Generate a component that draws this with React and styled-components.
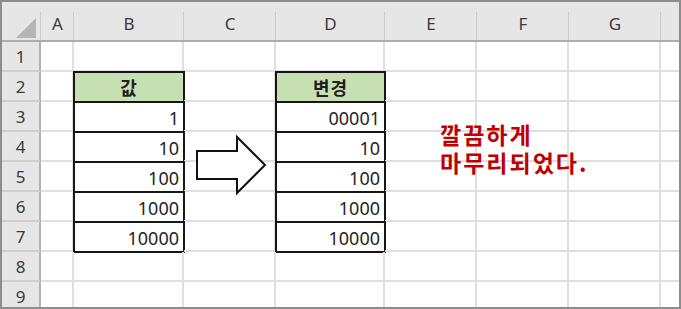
import React from 'react';
import styled, {createGlobalStyle} from 'styled-components';

const GlobalStyle = createGlobalStyle`
    html, body {
        margin: 0;
        padding: 0;
        background: #fff;
    }
    body {
        font-family: "Noto Sans", "Noto Sans CJK KR", sans-serif;
    }
`;

const COLUMNS = [
    {name: 'A', width: 33},
    {name: 'B', width: 110},
    {name: 'C', width: 92},
    {name: 'D', width: 109},
    {name: 'E', width: 92},
    {name: 'F', width: 92},
    {name: 'G', width: 92},
    {name: '', width: 92},
];

const ROWS = 9;

// boxed ranges: column name -> values for rows 2..7
const TABLES = {
    B: ['값', '1', '10', '100', '1000', '10000'],
    D: ['변경', '00001', '10', '100', '1000', '10000'],
};

const Frame = styled.div`
    position: relative;
    width: 681px;
    height: 309px;
    box-sizing: border-box;
    border: 2px solid #8d8d8d;
    overflow: hidden;
    background: #fff;
`;

const Sheet = styled.div`
    display: grid;
    grid-template-columns: 39px ${COLUMNS.map((c) => `${c.width}px`).join(' ')};
    grid-template-rows: 40px repeat(${ROWS}, 30px);
`;

const HeadCell = styled.div`
    position: relative;
    box-sizing: border-box;
    display: flex;
    justify-content: center;
    align-items: flex-end;
    padding-bottom: 4px;
    background: #e6e6e6;
    border-bottom: 2px solid #adadad;
    color: #3a3a3a;
    font-size: 17px;
    line-height: 24px;

    &::after {
        content: '';
        position: absolute;
        right: 0;
        top: 10px;
        bottom: 0;
        width: 1px;
        background: #cbcbcb;
    }
`;

const Corner = styled(HeadCell)`
    &::before {
        content: '';
        position: absolute;
        right: 5px;
        bottom: 2px;
        width: 0;
        height: 0;
        border-left: 20px solid transparent;
        border-bottom: 20px solid #b5b5b5;
    }
`;

const RowHead = styled.div`
    box-sizing: border-box;
    display: flex;
    justify-content: center;
    align-items: flex-end;
    padding-bottom: 1px;
    background: #e6e6e6;
    border-right: 2px solid #b2b2b2;
    border-bottom: 2px solid #cfcfcf;
    color: #3a3a3a;
    font-size: 17px;
    line-height: 24px;
`;

const Cell = styled.div`
    box-sizing: border-box;
    display: flex;
    align-items: flex-end;
    justify-content: flex-end;
    padding: 0 4px 1px 0;
    border-right: 2px solid #dfdfdf;
    border-bottom: 2px solid #dfdfdf;
    color: #1f1f1f;
    font-size: 18px;
    line-height: 24px;
    white-space: nowrap;
`;

const BoxCell = styled(Cell)`
    justify-content: ${(p) => (p.$head ? 'center' : 'flex-end')};
    align-items: ${(p) => (p.$head ? 'center' : 'flex-end')};
    padding: ${(p) => (p.$head ? '0 0 1px 0' : '0 4px 1px 0')};
    border: 1px solid #161616;
    outline: 1px solid #161616;
    background: ${(p) => (p.$head ? '#c6e0b4' : 'transparent')};
    font-family: ${(p) => (p.$head ? '"Noto Sans CJK KR", sans-serif' : 'inherit')};
    font-weight: ${(p) => (p.$head ? 700 : 400)};
    letter-spacing: ${(p) => (p.$head ? '1px' : '0')};
`;

const Arrow = styled.svg`
    position: absolute;
    left: 192px;
    top: 132px;
`;

const Note = styled.div`
    position: absolute;
    left: 438px;
    top: 118px;
    color: #c00000;
    font-family: "Noto Sans CJK KR", sans-serif;
    font-weight: 700;
    font-size: 23px;
    letter-spacing: 2px;
`;

const NoteLine = styled.div`
    height: 28px;
    line-height: 28px;
`;

function renderCell(col, row) {
    const values = TABLES[col.name];
    if (values && row >= 2 && row <= 7) {
        const head = row === 2;
        return (
            <BoxCell key={col.name + row} $head={head}>
                {values[row - 2]}
            </BoxCell>
        );
    }
    return <Cell key={col.name + row + '_' + col.width} />;
}

function App() {
    const rows = Array.from({length: ROWS}, (_, i) => i + 1);
    return (
        <>
            <GlobalStyle/>
            <Frame>
                <Sheet>
                    <Corner/>
                    {COLUMNS.map((col, i) => (
                        <HeadCell key={'h' + i}>{col.name}</HeadCell>
                    ))}
                    {rows.map((row) => (
                        <React.Fragment key={row}>
                            <RowHead>{row}</RowHead>
                            {COLUMNS.map((col) => renderCell(col, row))}
                        </React.Fragment>
                    ))}
                </Sheet>
                <Arrow width="74" height="62" viewBox="0 0 74 62">
                    <path
                        d="M3 17 H43 V3 L71 31 L43 59 V45 H3 Z"
                        fill="#fff"
                        stroke="#111"
                        strokeWidth="2"
                        strokeLinejoin="miter"
                    />
                </Arrow>
                <Note>
                    <NoteLine>깔끔하게</NoteLine>
                    <NoteLine>마무리되었다.</NoteLine>
                </Note>
            </Frame>
        </>
    );
}

export default App;
